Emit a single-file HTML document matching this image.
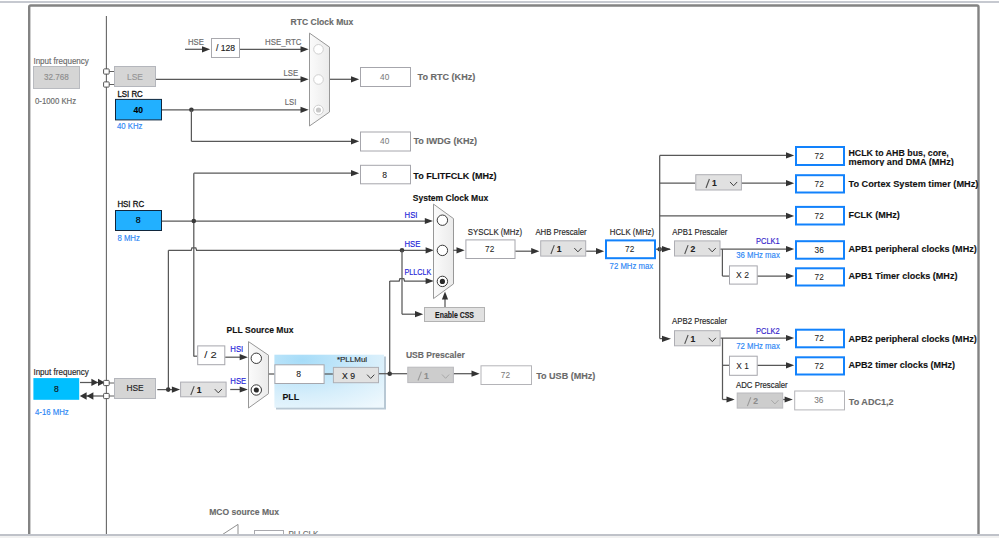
<!DOCTYPE html>
<html><head><meta charset="utf-8"><style>
html,body{margin:0;padding:0;background:#fff;width:999px;height:538px;overflow:hidden}
svg{display:block}
text{font-family:"Liberation Sans",sans-serif}
</style></head><body>
<svg width="999" height="538" viewBox="0 0 999 538">
<defs>
<linearGradient id="muxg" x1="0" y1="0" x2="1" y2="0"><stop offset="0" stop-color="#fbfbfb"/><stop offset="1" stop-color="#ebebeb"/></linearGradient>
<radialGradient id="pllg" cx="0.25" cy="0.1" r="1.1"><stop offset="0" stop-color="#a6dcf8"/><stop offset="0.6" stop-color="#d6eefb"/><stop offset="1" stop-color="#eef8fd"/></radialGradient>
</defs>
<rect x="0" y="0" width="999" height="538" fill="#fff"/>
<rect x="0" y="1" width="999" height="2" fill="#c6c9d0"/>
<rect x="29.2" y="5.5" width="949.3" height="560" rx="1.5" fill="none" stroke="#838383" stroke-width="2.4"/>
<line x1="106.4" y1="16" x2="106.4" y2="534" stroke="#666" stroke-width="1.1"/>
<text x="33.4" y="63.5" font-size="8.3" fill="#6a6a6a" stroke="#6a6a6a" stroke-width="0.15" text-anchor="start" textLength="55.5" lengthAdjust="spacingAndGlyphs" >Input frequency</text>
<rect x="33.5" y="66.5" width="46.0" height="22.0" fill="#d5d5d5" stroke="#b9bbc0" stroke-width="1" />
<text x="56.3" y="80.3" font-size="8.9" fill="#8e8e8e" stroke="#8e8e8e" stroke-width="0.15" text-anchor="middle" textLength="24.8" lengthAdjust="spacingAndGlyphs" >32.768</text>
<text x="35" y="103.7" font-size="8.3" fill="#6a6a6a" stroke="#6a6a6a" stroke-width="0.15" text-anchor="start" textLength="41.1" lengthAdjust="spacingAndGlyphs" >0-1000 KHz</text>
<line x1="109" y1="71.5" x2="114" y2="71.5" stroke="#606060" stroke-width="1"/>
<line x1="109" y1="84.5" x2="114" y2="84.5" stroke="#606060" stroke-width="1"/>
<rect x="103.60000000000001" y="68.9" width="5.599999999999994" height="5.199999999999989" fill="#fff" stroke="#555" stroke-width="1" rx="0.8"/>
<rect x="103.60000000000001" y="81.9" width="5.599999999999994" height="5.199999999999989" fill="#fff" stroke="#555" stroke-width="1" rx="0.8"/>
<rect x="114.5" y="66.5" width="41.0" height="20.0" fill="#d5d5d5" stroke="#b4b6bc" stroke-width="1" />
<text x="135" y="79.5" font-size="8.4" fill="#959595" stroke="#959595" stroke-width="0.15" text-anchor="middle" >LSE</text>
<text x="188" y="44.6" font-size="8.3" fill="#6a6a6a" stroke="#6a6a6a" stroke-width="0.15" text-anchor="start" textLength="15.9" lengthAdjust="spacingAndGlyphs" >HSE</text>
<line x1="185" y1="49.3" x2="207" y2="49.3" stroke="#585858" stroke-width="1.25"/>
<polygon points="210.20,49.30 202.00,46.20 202.00,52.40" fill="#333"/>
<rect x="211.5" y="38.5" width="28.0" height="19.0" fill="#fff" stroke="#a9a9ae" stroke-width="1" />
<text x="225.5" y="51.2" font-size="8.6" fill="#222" stroke="#222" stroke-width="0.15" text-anchor="middle" >/ 128</text>
<text x="301.5" y="45.2" font-size="8.3" fill="#6a6a6a" stroke="#6a6a6a" stroke-width="0.15" text-anchor="end" textLength="36.4" lengthAdjust="spacingAndGlyphs" >HSE_RTC</text>
<line x1="240" y1="49.3" x2="305.5" y2="49.3" stroke="#585858" stroke-width="1.25"/>
<polygon points="308.70,49.30 300.50,46.20 300.50,52.40" fill="#333"/>
<text x="298.2" y="75.8" font-size="8.3" fill="#6a6a6a" stroke="#6a6a6a" stroke-width="0.15" text-anchor="end" textLength="14.7" lengthAdjust="spacingAndGlyphs" >LSE</text>
<line x1="156" y1="79.3" x2="305.5" y2="79.3" stroke="#585858" stroke-width="1.25"/>
<polygon points="308.70,79.30 300.50,76.20 300.50,82.40" fill="#333"/>
<text x="296.4" y="105.4" font-size="8.3" fill="#6a6a6a" stroke="#6a6a6a" stroke-width="0.15" text-anchor="end" textLength="11.6" lengthAdjust="spacingAndGlyphs" >LSI</text>
<line x1="162" y1="109.8" x2="305.5" y2="109.8" stroke="#585858" stroke-width="1.25"/>
<polygon points="308.70,109.80 300.50,106.70 300.50,112.90" fill="#333"/>
<text x="290.6" y="25.3" font-size="8.55" fill="#6a6a6a" font-weight="bold" stroke="#6a6a6a" stroke-width="0.12" text-anchor="start" >RTC Clock Mux</text>
<polygon points="309.5,33.1 329.5,47.1 329.5,112 309.5,126" fill="url(#muxg)" stroke="#989898" stroke-width="1"/>
<circle cx="318.5" cy="49.3" r="4.8" fill="#fff" stroke="#d0d0d0" stroke-width="1"/>
<circle cx="318.5" cy="79.5" r="4.8" fill="#fff" stroke="#d0d0d0" stroke-width="1"/>
<circle cx="318.5" cy="110" r="4.8" fill="#fff" stroke="#d0d0d0" stroke-width="1"/>
<circle cx="318.5" cy="110" r="2.6" fill="#c8c8c8"/>
<line x1="330" y1="79.3" x2="356" y2="79.3" stroke="#585858" stroke-width="1.25"/>
<polygon points="359.20,79.30 351.00,76.20 351.00,82.40" fill="#333"/>
<rect x="360.5" y="67.5" width="50.0" height="19.0" fill="#fff" stroke="#a6a6ac" stroke-width="1" />
<text x="384.7" y="79.95" font-size="9.0" fill="#7a7a7a" stroke="#7a7a7a" stroke-width="0.05" text-anchor="middle" textLength="9.2" lengthAdjust="spacingAndGlyphs" >40</text>
<text x="417.6" y="80.1" font-size="9.05" fill="#6a6a6a" font-weight="bold" stroke="#6a6a6a" stroke-width="0.12" text-anchor="start" >To RTC (KHz)</text>
<text x="117.4" y="96.6" font-size="8.3" fill="#111" stroke="#111" stroke-width="0.3" text-anchor="start" textLength="25.4" lengthAdjust="spacingAndGlyphs" >LSI RC</text>
<rect x="115.5" y="99.4" width="46.0" height="20.5" fill="#22b0ff" stroke="#10263c" stroke-width="1" />
<text x="138.2" y="112.8" font-size="8.6" fill="#000" font-weight="bold" stroke="#000" stroke-width="0.12" text-anchor="middle" >40</text>
<text x="117" y="129" font-size="8.3" fill="#2b86f5" stroke="#2b86f5" stroke-width="0.15" text-anchor="start" textLength="25.5" lengthAdjust="spacingAndGlyphs" >40 KHz</text>
<circle cx="191.4" cy="109.8" r="2.3" fill="#3a3a3a"/>
<line x1="191.4" y1="109.8" x2="191.4" y2="141.3" stroke="#585858" stroke-width="1.25"/>
<line x1="191.4" y1="141.3" x2="356" y2="141.3" stroke="#585858" stroke-width="1.25"/>
<polygon points="359.20,141.30 351.00,138.20 351.00,144.40" fill="#333"/>
<rect x="360.5" y="132.0" width="50.0" height="19.0" fill="#fff" stroke="#a6a6ac" stroke-width="1" />
<text x="384.7" y="144.45" font-size="9.0" fill="#7a7a7a" stroke="#7a7a7a" stroke-width="0.05" text-anchor="middle" textLength="9.2" lengthAdjust="spacingAndGlyphs" >40</text>
<text x="413.4" y="144.2" font-size="9.05" fill="#6a6a6a" font-weight="bold" stroke="#6a6a6a" stroke-width="0.12" text-anchor="start" >To IWDG (KHz)</text>
<line x1="193.8" y1="173.2" x2="193.8" y2="356.5" stroke="#585858" stroke-width="1.25"/>
<line x1="193.8" y1="173.2" x2="356" y2="173.2" stroke="#585858" stroke-width="1.25"/>
<polygon points="359.20,173.20 351.00,170.10 351.00,176.30" fill="#333"/>
<rect x="360.5" y="165.3" width="50.0" height="18.5" fill="#fff" stroke="#a6a6ac" stroke-width="1" />
<text x="384.7" y="177.5" font-size="9.0" fill="#222" stroke="#222" stroke-width="0.05" text-anchor="middle" textLength="4.8" lengthAdjust="spacingAndGlyphs" >8</text>
<text x="413.3" y="179.3" font-size="9.05" fill="#111" font-weight="bold" stroke="#111" stroke-width="0.12" text-anchor="start" >To FLITFCLK (MHz)</text>
<text x="117.4" y="207" font-size="8.3" fill="#111" stroke="#111" stroke-width="0.3" text-anchor="start" textLength="26.7" lengthAdjust="spacingAndGlyphs" >HSI RC</text>
<rect x="115.5" y="210.5" width="46.0" height="20.0" fill="#22b0ff" stroke="#10263c" stroke-width="1" />
<text x="138.1" y="223.3" font-size="8.8" fill="#000" stroke="#000" stroke-width="0.15" text-anchor="middle" >8</text>
<text x="117.4" y="240.8" font-size="8.3" fill="#2b86f5" stroke="#2b86f5" stroke-width="0.15" text-anchor="start" textLength="22.5" lengthAdjust="spacingAndGlyphs" >8 MHz</text>
<line x1="162" y1="221" x2="429.8" y2="221" stroke="#585858" stroke-width="1.25"/>
<polygon points="433.00,221.00 424.80,217.90 424.80,224.10" fill="#333"/>
<circle cx="193.8" cy="221" r="2.3" fill="#3a3a3a"/>
<text x="404.6" y="217.8" font-size="8.3" fill="#2121d8" stroke="#2121d8" stroke-width="0.15" text-anchor="start" textLength="12.9" lengthAdjust="spacingAndGlyphs" >HSI</text>
<path d="M168.4,250.3 H191.2 L191.9,247.8 H195.8 L196.6,250.3 H429.8" fill="none" stroke="#585858" stroke-width="1.25"/>
<polygon points="433.80,250.30 425.60,247.20 425.60,253.40" fill="#333"/>
<circle cx="402" cy="250.3" r="2.3" fill="#3a3a3a"/>
<text x="404.5" y="246.7" font-size="8.3" fill="#2121d8" stroke="#2121d8" stroke-width="0.15" text-anchor="start" textLength="15.9" lengthAdjust="spacingAndGlyphs" >HSE</text>
<line x1="168.4" y1="250.3" x2="168.4" y2="389.5" stroke="#585858" stroke-width="1.25"/>
<line x1="402" y1="250.3" x2="402" y2="314.2" stroke="#585858" stroke-width="1.25"/>
<line x1="402" y1="314.2" x2="420" y2="314.2" stroke="#585858" stroke-width="1.25"/>
<polygon points="423.20,314.20 415.00,311.10 415.00,317.30" fill="#333"/>
<rect x="424.5" y="307.5" width="60.0" height="14.0" fill="#e1e1e1" stroke="#b2b2b2" stroke-width="1" />
<text x="454.5" y="318.1" font-size="8.3" fill="#1a1a1a" font-weight="bold" stroke="#1a1a1a" stroke-width="0.12" text-anchor="middle" textLength="39" lengthAdjust="spacingAndGlyphs" >Enable CSS</text>
<line x1="445" y1="307" x2="445" y2="296" stroke="#585858" stroke-width="1.25"/>
<polygon points="445.00,291.40 441.90,299.60 448.10,299.60" fill="#333"/>
<path d="M389.7,281 H399.2 L399.9,278.5 H403.8 L404.5,281 H429.8" fill="none" stroke="#585858" stroke-width="1.25"/>
<polygon points="433.80,281.00 425.60,277.90 425.60,284.10" fill="#333"/>
<text x="404.5" y="274.8" font-size="8.3" fill="#2121d8" stroke="#2121d8" stroke-width="0.15" text-anchor="start" textLength="26.8" lengthAdjust="spacingAndGlyphs" >PLLCLK</text>
<line x1="389.7" y1="281" x2="389.7" y2="373.7" stroke="#585858" stroke-width="1.25"/>
<text x="412.7" y="201" font-size="8.55" fill="#111" font-weight="bold" stroke="#111" stroke-width="0.12" text-anchor="start" >System Clock Mux</text>
<polygon points="433.5,204.1 453.5,218.6 453.5,283.9 433.5,298.6" fill="url(#muxg)" stroke="#989898" stroke-width="1"/>
<circle cx="442.4" cy="220.2" r="5.2" fill="#fff" stroke="#3a3a3a" stroke-width="1"/>
<circle cx="442.4" cy="250.4" r="5.2" fill="#fff" stroke="#3a3a3a" stroke-width="1"/>
<circle cx="442.4" cy="281.4" r="5.2" fill="#fff" stroke="#3a3a3a" stroke-width="1"/>
<circle cx="442.4" cy="281.4" r="2.6" fill="#2a2a2a"/>
<line x1="453.3" y1="250.3" x2="461.5" y2="250.3" stroke="#585858" stroke-width="1.25"/>
<polygon points="464.70,250.30 456.50,247.20 456.50,253.40" fill="#333"/>
<rect x="465.9" y="239.9" width="49.10000000000002" height="18.599999999999994" fill="#fff" stroke="#a6a6ac" stroke-width="1" />
<text x="489.65" y="252.14999999999998" font-size="9.0" fill="#222" stroke="#222" stroke-width="0.05" text-anchor="middle" textLength="9.2" lengthAdjust="spacingAndGlyphs" >72</text>
<text x="467.8" y="235" font-size="8.3" fill="#262626" stroke="#262626" stroke-width="0.15" text-anchor="start" textLength="54.2" lengthAdjust="spacingAndGlyphs" >SYSCLK (MHz)</text>
<line x1="515.5" y1="251.2" x2="536.2" y2="251.2" stroke="#585858" stroke-width="1.25"/>
<polygon points="539.40,251.20 531.20,248.10 531.20,254.30" fill="#333"/>
<rect x="540.7" y="240.8" width="45.0" height="15.300000000000011" fill="#e1e1e1" stroke="#aeaeb4" stroke-width="1" />
<line x1="550.9000000000001" y1="254.05" x2="554.3000000000001" y2="245.15" stroke="#505050" stroke-width="1.1"/>
<text x="556.8000000000001" y="252.15" font-size="8.6" fill="#222" font-weight="bold" stroke="#222" stroke-width="0.12" text-anchor="start" >1</text>
<polyline points="574.3000000000001,248.05 577.9000000000001,251.85000000000002 581.5000000000001,248.05" fill="none" stroke="#404040" stroke-width="1" />
<text x="535.4" y="234.6" font-size="8.3" fill="#262626" stroke="#262626" stroke-width="0.15" text-anchor="start" textLength="51.2" lengthAdjust="spacingAndGlyphs" >AHB Prescaler</text>
<line x1="586.2" y1="251.2" x2="601" y2="251.2" stroke="#585858" stroke-width="1.25"/>
<polygon points="604.20,251.20 596.00,248.10 596.00,254.30" fill="#333"/>
<rect x="606" y="240.4" width="49" height="17.799999999999983" fill="#fff" stroke="#1282fc" stroke-width="2" />
<text x="629.7" y="252.25" font-size="9.0" fill="#222" stroke="#222" stroke-width="0.05" text-anchor="middle" textLength="9.2" lengthAdjust="spacingAndGlyphs" >72</text>
<text x="609.8" y="235" font-size="8.3" fill="#262626" stroke="#262626" stroke-width="0.15" text-anchor="start" textLength="44.3" lengthAdjust="spacingAndGlyphs" >HCLK (MHz)</text>
<text x="609.6" y="268.5" font-size="8.3" fill="#2b86f5" stroke="#2b86f5" stroke-width="0.15" text-anchor="start" textLength="43.6" lengthAdjust="spacingAndGlyphs" >72 MHz max</text>
<line x1="656" y1="249.2" x2="659.7" y2="249.2" stroke="#585858" stroke-width="1.25"/>
<circle cx="659.7" cy="249.2" r="2.3" fill="#3a3a3a"/>
<line x1="659.7" y1="155.4" x2="659.7" y2="338.6" stroke="#585858" stroke-width="1.25"/>
<line x1="659.7" y1="155.4" x2="791" y2="155.4" stroke="#585858" stroke-width="1.25"/>
<polygon points="794.20,155.40 786.00,152.30 786.00,158.50" fill="#333"/>
<rect x="796" y="147" width="48" height="18" fill="#fff" stroke="#1282fc" stroke-width="2" />
<text x="819.2" y="158.95" font-size="9.0" fill="#222" stroke="#222" stroke-width="0.05" text-anchor="middle" textLength="9.2" lengthAdjust="spacingAndGlyphs" >72</text>
<clipPath id="c1"><rect x="840" y="140" width="140" height="26"/></clipPath>
<text x="848.5" y="156.2" font-size="9.05" fill="#111" font-weight="bold" stroke="#111" stroke-width="0.12" text-anchor="start" textLength="100.3" lengthAdjust="spacingAndGlyphs" clip-path="url(#c1)">HCLK to AHB bus, core,</text>
<text x="848.5" y="165.4" font-size="9.05" fill="#111" font-weight="bold" stroke="#111" stroke-width="0.12" text-anchor="start" textLength="105.3" lengthAdjust="spacingAndGlyphs" clip-path="url(#c1)">memory and DMA (MHz)</text>
<line x1="659.7" y1="183.2" x2="695.3" y2="183.2" stroke="#585858" stroke-width="1.25"/>
<rect x="695.8" y="174.7" width="45.60000000000002" height="15.300000000000011" fill="#e1e1e1" stroke="#aeaeb4" stroke-width="1" />
<line x1="706.0" y1="187.95" x2="709.4" y2="179.04999999999998" stroke="#505050" stroke-width="1.1"/>
<text x="711.9" y="186.04999999999998" font-size="8.6" fill="#222" font-weight="bold" stroke="#222" stroke-width="0.12" text-anchor="start" >1</text>
<polyline points="730.0,181.95 733.6,185.75 737.2,181.95" fill="none" stroke="#404040" stroke-width="1" />
<line x1="741.9" y1="183.2" x2="791" y2="183.2" stroke="#585858" stroke-width="1.25"/>
<polygon points="794.20,183.20 786.00,180.10 786.00,186.30" fill="#333"/>
<rect x="796" y="175.2" width="48" height="17.30000000000001" fill="#fff" stroke="#1282fc" stroke-width="2" />
<text x="819.2" y="186.79999999999998" font-size="9.0" fill="#222" stroke="#222" stroke-width="0.05" text-anchor="middle" textLength="9.2" lengthAdjust="spacingAndGlyphs" >72</text>
<text x="848.5" y="186.6" font-size="9.05" fill="#111" font-weight="bold" stroke="#111" stroke-width="0.12" text-anchor="start" textLength="129.8" lengthAdjust="spacingAndGlyphs" >To Cortex System timer (MHz)</text>
<line x1="659.7" y1="215.9" x2="791" y2="215.9" stroke="#585858" stroke-width="1.25"/>
<polygon points="794.20,215.90 786.00,212.80 786.00,219.00" fill="#333"/>
<rect x="796" y="206.9" width="48" height="17.599999999999994" fill="#fff" stroke="#1282fc" stroke-width="2" />
<text x="819.2" y="218.64999999999998" font-size="9.0" fill="#222" stroke="#222" stroke-width="0.05" text-anchor="middle" textLength="9.2" lengthAdjust="spacingAndGlyphs" >72</text>
<text x="848.5" y="217.8" font-size="9.05" fill="#111" font-weight="bold" stroke="#111" stroke-width="0.12" text-anchor="start" >FCLK (MHz)</text>
<line x1="659.7" y1="249.2" x2="670" y2="249.2" stroke="#585858" stroke-width="1.25"/>
<polygon points="671.00,249.20 662.00,246.10 662.00,252.30" fill="#333"/>
<rect x="674.5" y="240.9" width="45.5" height="15.099999999999994" fill="#e1e1e1" stroke="#aeaeb4" stroke-width="1" />
<line x1="684.7" y1="254.04999999999998" x2="688.1" y2="245.14999999999998" stroke="#505050" stroke-width="1.1"/>
<text x="690.6" y="252.14999999999998" font-size="8.6" fill="#222" font-weight="bold" stroke="#222" stroke-width="0.12" text-anchor="start" >2</text>
<polyline points="708.6,248.04999999999998 712.2,251.85 715.8000000000001,248.04999999999998" fill="none" stroke="#404040" stroke-width="1" />
<text x="672.3" y="235.1" font-size="8.3" fill="#262626" stroke="#262626" stroke-width="0.15" text-anchor="start" textLength="55.1" lengthAdjust="spacingAndGlyphs" >APB1 Prescaler</text>
<line x1="720.5" y1="249.1" x2="791" y2="249.1" stroke="#585858" stroke-width="1.25"/>
<polygon points="794.20,249.10 786.00,246.00 786.00,252.20" fill="#333"/>
<text x="779.8" y="243.6" font-size="8.3" fill="#3322cc" stroke="#3322cc" stroke-width="0.15" text-anchor="end" textLength="23.8" lengthAdjust="spacingAndGlyphs" >PCLK1</text>
<text x="779.8" y="257.9" font-size="8.3" fill="#2b86f5" stroke="#2b86f5" stroke-width="0.15" text-anchor="end" textLength="43.6" lengthAdjust="spacingAndGlyphs" >36 MHz max</text>
<rect x="796" y="241.2" width="48" height="17.5" fill="#fff" stroke="#1282fc" stroke-width="2" />
<text x="819.2" y="252.89999999999998" font-size="9.0" fill="#222" stroke="#222" stroke-width="0.05" text-anchor="middle" textLength="9.2" lengthAdjust="spacingAndGlyphs" >36</text>
<text x="848.5" y="252.3" font-size="9.05" fill="#111" font-weight="bold" stroke="#111" stroke-width="0.12" text-anchor="start" >APB1 peripheral clocks (MHz)</text>
<line x1="722.4" y1="249.1" x2="722.4" y2="276.1" stroke="#585858" stroke-width="1.25"/>
<line x1="722.4" y1="276.1" x2="729" y2="276.1" stroke="#585858" stroke-width="1.25"/>
<rect x="729.5" y="265.9" width="27.700000000000045" height="18.200000000000045" fill="#fff" stroke="#a6a6ac" stroke-width="1" />
<text x="742.5500000000001" y="277.95" font-size="9.0" fill="#222" stroke="#222" stroke-width="0.05" text-anchor="middle" textLength="13" lengthAdjust="spacingAndGlyphs" >X 2</text>
<line x1="757.7" y1="276.1" x2="791" y2="276.1" stroke="#585858" stroke-width="1.25"/>
<polygon points="794.20,276.10 786.00,273.00 786.00,279.20" fill="#333"/>
<rect x="796" y="268.3" width="48" height="17.19999999999999" fill="#fff" stroke="#1282fc" stroke-width="2" />
<text x="819.2" y="279.84999999999997" font-size="9.0" fill="#222" stroke="#222" stroke-width="0.05" text-anchor="middle" textLength="9.2" lengthAdjust="spacingAndGlyphs" >72</text>
<text x="848.5" y="279.0" font-size="9.05" fill="#111" font-weight="bold" stroke="#111" stroke-width="0.12" text-anchor="start" >APB1 Timer clocks (MHz)</text>
<path d="M659.7,338.6 H666" fill="none" stroke="#585858" stroke-width="1.25"/>
<polygon points="671.00,338.80 662.00,335.70 662.00,341.90" fill="#333"/>
<rect x="674.5" y="330.7" width="45.60000000000002" height="15.100000000000023" fill="#e1e1e1" stroke="#aeaeb4" stroke-width="1" />
<line x1="684.7" y1="343.85" x2="688.1" y2="334.95" stroke="#505050" stroke-width="1.1"/>
<text x="690.6" y="341.95" font-size="8.6" fill="#222" font-weight="bold" stroke="#222" stroke-width="0.12" text-anchor="start" >1</text>
<polyline points="708.7,337.85 712.3000000000001,341.65 715.9000000000001,337.85" fill="none" stroke="#404040" stroke-width="1" />
<text x="672.1" y="324.3" font-size="8.3" fill="#262626" stroke="#262626" stroke-width="0.15" text-anchor="start" textLength="55.1" lengthAdjust="spacingAndGlyphs" >APB2 Prescaler</text>
<line x1="720.6" y1="338" x2="791" y2="338" stroke="#585858" stroke-width="1.25"/>
<polygon points="794.20,338.00 786.00,334.90 786.00,341.10" fill="#333"/>
<text x="779.8" y="333.7" font-size="8.3" fill="#3322cc" stroke="#3322cc" stroke-width="0.15" text-anchor="end" textLength="23.8" lengthAdjust="spacingAndGlyphs" >PCLK2</text>
<text x="779.8" y="348.7" font-size="8.3" fill="#2b86f5" stroke="#2b86f5" stroke-width="0.15" text-anchor="end" textLength="43.6" lengthAdjust="spacingAndGlyphs" >72 MHz max</text>
<rect x="796" y="329.7" width="48" height="17.600000000000023" fill="#fff" stroke="#1282fc" stroke-width="2" />
<text x="819.2" y="341.45" font-size="9.0" fill="#222" stroke="#222" stroke-width="0.05" text-anchor="middle" textLength="9.2" lengthAdjust="spacingAndGlyphs" >72</text>
<text x="848.5" y="341.6" font-size="9.05" fill="#111" font-weight="bold" stroke="#111" stroke-width="0.12" text-anchor="start" >APB2 peripheral clocks (MHz)</text>
<line x1="722.5" y1="338" x2="722.5" y2="399.5" stroke="#585858" stroke-width="1.25"/>
<line x1="722.5" y1="365.3" x2="729" y2="365.3" stroke="#585858" stroke-width="1.25"/>
<rect x="729.5" y="356.2" width="27.700000000000045" height="19.100000000000023" fill="#fff" stroke="#a6a6ac" stroke-width="1" />
<text x="742.5500000000001" y="368.7" font-size="9.0" fill="#222" stroke="#222" stroke-width="0.05" text-anchor="middle" textLength="12.5" lengthAdjust="spacingAndGlyphs" >X 1</text>
<line x1="757.7" y1="365.3" x2="791" y2="365.3" stroke="#585858" stroke-width="1.25"/>
<polygon points="794.20,365.30 786.00,362.20 786.00,368.40" fill="#333"/>
<rect x="796" y="357.3" width="48" height="17.19999999999999" fill="#fff" stroke="#1282fc" stroke-width="2" />
<text x="819.2" y="368.84999999999997" font-size="9.0" fill="#222" stroke="#222" stroke-width="0.05" text-anchor="middle" textLength="9.2" lengthAdjust="spacingAndGlyphs" >72</text>
<text x="848.5" y="367.9" font-size="9.05" fill="#111" font-weight="bold" stroke="#111" stroke-width="0.12" text-anchor="start" >APB2 timer clocks (MHz)</text>
<line x1="722.5" y1="399.5" x2="732.7" y2="399.5" stroke="#585858" stroke-width="1.25"/>
<polygon points="734.70,399.50 726.50,396.40 726.50,402.60" fill="#333"/>
<rect x="737.2" y="393.0" width="45.5" height="15.100000000000023" fill="#cdcdcd" stroke="#b9b9bd" stroke-width="1" />
<line x1="747.4000000000001" y1="406.15000000000003" x2="750.8000000000001" y2="397.25" stroke="#9a9a9a" stroke-width="1.1"/>
<text x="753.3000000000001" y="404.25" font-size="8.6" fill="#8c8c8c" font-weight="bold" stroke="#8c8c8c" stroke-width="0.12" text-anchor="start" >2</text>
<polyline points="771.3000000000001,400.15000000000003 774.9000000000001,403.95 778.5000000000001,400.15000000000003" fill="none" stroke="#a8a8a8" stroke-width="1" />
<text x="736" y="387.9" font-size="8.3" fill="#262626" stroke="#262626" stroke-width="0.15" text-anchor="start" textLength="51.7" lengthAdjust="spacingAndGlyphs" >ADC Prescaler</text>
<line x1="783.2" y1="399.5" x2="790.2" y2="399.5" stroke="#585858" stroke-width="1.25"/>
<polygon points="792.80,399.50 784.60,396.40 784.60,402.60" fill="#333"/>
<rect x="794.7" y="391.0" width="49.799999999999955" height="18.899999999999977" fill="#fff" stroke="#b4b4b8" stroke-width="1" />
<text x="818.8000000000001" y="403.4" font-size="9.0" fill="#7a7a7a" stroke="#7a7a7a" stroke-width="0.05" text-anchor="middle" textLength="9.2" lengthAdjust="spacingAndGlyphs" >36</text>
<text x="848.8" y="404.8" font-size="9.05" fill="#6a6a6a" font-weight="bold" stroke="#6a6a6a" stroke-width="0.12" text-anchor="start" >To ADC1,2</text>
<line x1="193.8" y1="356.2" x2="197.2" y2="356.2" stroke="#585858" stroke-width="1.25"/>
<rect x="197.7" y="345.9" width="27.100000000000023" height="18.80000000000001" fill="#fff" stroke="#a6a6ac" stroke-width="1" />
<text x="210.45" y="358.24999999999994" font-size="9.0" fill="#222" stroke="#222" stroke-width="0.05" text-anchor="middle" textLength="12.5" lengthAdjust="spacingAndGlyphs" >/ 2</text>
<line x1="225.3" y1="357.2" x2="244.7" y2="357.2" stroke="#585858" stroke-width="1.25"/>
<polygon points="247.90,357.20 239.70,354.10 239.70,360.30" fill="#333"/>
<text x="230.3" y="351.5" font-size="8.3" fill="#2121d8" stroke="#2121d8" stroke-width="0.15" text-anchor="start" textLength="12.9" lengthAdjust="spacingAndGlyphs" >HSI</text>
<line x1="157.3" y1="389.6" x2="176" y2="389.6" stroke="#585858" stroke-width="1.25"/>
<circle cx="168.2" cy="389.6" r="2.3" fill="#3a3a3a"/>
<polygon points="180.10,389.60 171.90,386.50 171.90,392.70" fill="#333"/>
<rect x="180.6" y="382.1" width="45.5" height="14.699999999999989" fill="#e1e1e1" stroke="#aeaeb4" stroke-width="1" />
<line x1="190.79999999999998" y1="395.05000000000007" x2="194.2" y2="386.15000000000003" stroke="#505050" stroke-width="1.1"/>
<text x="196.7" y="393.15000000000003" font-size="8.6" fill="#222" font-weight="bold" stroke="#222" stroke-width="0.12" text-anchor="start" >1</text>
<polyline points="214.7,389.05000000000007 218.29999999999998,392.85 221.89999999999998,389.05000000000007" fill="none" stroke="#404040" stroke-width="1" />
<line x1="230.2" y1="389.5" x2="244.7" y2="389.5" stroke="#585858" stroke-width="1.25"/>
<polygon points="247.90,389.50 239.70,386.40 239.70,392.60" fill="#333"/>
<text x="230.3" y="383.9" font-size="8.3" fill="#2121d8" stroke="#2121d8" stroke-width="0.15" text-anchor="start" textLength="15.9" lengthAdjust="spacingAndGlyphs" >HSE</text>
<text x="226.6" y="333" font-size="8.55" fill="#111" font-weight="bold" stroke="#111" stroke-width="0.12" text-anchor="start" >PLL Source Mux</text>
<rect x="276" y="356.5" width="110" height="53" fill="#b8c8d4"/>
<rect x="274.4" y="354.7" width="109.6" height="53" fill="url(#pllg)"/>
<polygon points="248.5,341.6 268.5,355.2 268.5,393.7 248.5,408" fill="url(#muxg)" stroke="#989898" stroke-width="1"/>
<circle cx="256.3" cy="358.3" r="5.2" fill="#fff" stroke="#3a3a3a" stroke-width="1"/>
<circle cx="256.3" cy="390" r="5.2" fill="#fff" stroke="#3a3a3a" stroke-width="1"/>
<circle cx="256.3" cy="390" r="2.6" fill="#2a2a2a"/>
<line x1="268.8" y1="374" x2="274.4" y2="374" stroke="#585858" stroke-width="1.25"/>
<rect x="274.9" y="364.8" width="49.200000000000045" height="18.69999999999999" fill="#fff" stroke="#a6a6ac" stroke-width="1" />
<text x="298.7" y="377.09999999999997" font-size="9.0" fill="#222" stroke="#222" stroke-width="0.05" text-anchor="middle" textLength="4.8" lengthAdjust="spacingAndGlyphs" >8</text>
<line x1="324.6" y1="374" x2="332.9" y2="374" stroke="#585858" stroke-width="1.25"/>
<rect x="333.4" y="367.4" width="45.10000000000002" height="15.300000000000011" fill="#e1e1e1" stroke="#aeaeb4" stroke-width="1" />
<text x="342.09999999999997" y="378.84999999999997" font-size="8.6" fill="#222" stroke="#222" stroke-width="0.15" text-anchor="start" >X 9</text>
<polyline points="367.09999999999997,374.65 370.7,378.44999999999993 374.3,374.65" fill="none" stroke="#404040" stroke-width="1" />
<text x="336.9" y="362.1" font-size="8.0" fill="#262626" stroke="#262626" stroke-width="0.15" text-anchor="start" >*PLLMul</text>
<text x="282.4" y="400" font-size="8.8" fill="#111" font-weight="bold" stroke="#111" stroke-width="0.12" text-anchor="start" >PLL</text>
<line x1="379" y1="373.7" x2="407.3" y2="373.7" stroke="#585858" stroke-width="1.25"/>
<circle cx="389.7" cy="373.7" r="2.3" fill="#3a3a3a"/>
<rect x="407.8" y="367.2" width="45.599999999999966" height="15.400000000000034" fill="#cdcdcd" stroke="#b9b9bd" stroke-width="1" />
<line x1="418.0" y1="380.5" x2="421.40000000000003" y2="371.59999999999997" stroke="#9a9a9a" stroke-width="1.1"/>
<text x="423.90000000000003" y="378.59999999999997" font-size="8.6" fill="#8c8c8c" font-weight="bold" stroke="#8c8c8c" stroke-width="0.12" text-anchor="start" >1</text>
<polyline points="441.99999999999994,374.5 445.59999999999997,378.29999999999995 449.2,374.5" fill="none" stroke="#a8a8a8" stroke-width="1" />
<text x="405.9" y="357.9" font-size="8.55" fill="#6a6a6a" font-weight="bold" stroke="#6a6a6a" stroke-width="0.12" text-anchor="start" >USB Prescaler</text>
<line x1="453.9" y1="373.7" x2="476.5" y2="373.7" stroke="#585858" stroke-width="1.25"/>
<polygon points="479.70,373.70 471.50,370.60 471.50,376.80" fill="#333"/>
<rect x="481.0" y="365.8" width="50.5" height="18.69999999999999" fill="#fff" stroke="#b4b4b8" stroke-width="1" />
<text x="505.45" y="378.09999999999997" font-size="9.0" fill="#7a7a7a" stroke="#7a7a7a" stroke-width="0.05" text-anchor="middle" textLength="9.2" lengthAdjust="spacingAndGlyphs" >72</text>
<text x="536.2" y="379.1" font-size="9.05" fill="#6a6a6a" font-weight="bold" stroke="#6a6a6a" stroke-width="0.12" text-anchor="start" >To USB (MHz)</text>
<text x="33.4" y="375.1" font-size="8.3" fill="#262626" stroke="#262626" stroke-width="0.15" text-anchor="start" textLength="55.5" lengthAdjust="spacingAndGlyphs" >Input frequency</text>
<rect x="33.4" y="378.1" width="45.800000000000004" height="21.69999999999999" fill="#00bfff" stroke="none" stroke-width="1" />
<text x="56.5" y="392.3" font-size="8.6" fill="#111" stroke="#111" stroke-width="0.15" text-anchor="middle" >8</text>
<text x="35" y="414.7" font-size="8.3" fill="#2b86f5" stroke="#2b86f5" stroke-width="0.15" text-anchor="start" textLength="33.7" lengthAdjust="spacingAndGlyphs" >4-16 MHz</text>
<line x1="80" y1="382.5" x2="100" y2="382.5" stroke="#585858" stroke-width="1.25"/>
<polygon points="98.20,382.40 91.40,378.70 91.40,386.10" fill="#333"/>
<polygon points="104.80,382.40 98.00,378.70 98.00,386.10" fill="#333"/>
<line x1="86" y1="396" x2="103.5" y2="396" stroke="#585858" stroke-width="1.25"/>
<polygon points="79.80,396.00 86.60,392.30 86.60,399.70" fill="#333"/>
<polygon points="86.60,396.00 93.40,392.30 93.40,399.70" fill="#333"/>
<line x1="109" y1="383" x2="114" y2="383" stroke="#606060" stroke-width="1"/>
<line x1="109" y1="396" x2="114" y2="396" stroke="#606060" stroke-width="1"/>
<rect x="103.60000000000001" y="380.4" width="5.599999999999994" height="5.2000000000000455" fill="#fff" stroke="#555" stroke-width="1" rx="0.8"/>
<rect x="103.60000000000001" y="393.4" width="5.599999999999994" height="5.2000000000000455" fill="#fff" stroke="#555" stroke-width="1" rx="0.8"/>
<rect x="114.5" y="378.5" width="41.0" height="20.0" fill="#d5d5d5" stroke="#b4b6bc" stroke-width="1" />
<text x="135" y="391.2" font-size="8.4" fill="#1e1e1e" stroke="#1e1e1e" stroke-width="0.15" text-anchor="middle" >HSE</text>
<text x="209.2" y="515" font-size="8.55" fill="#6a6a6a" font-weight="bold" stroke="#6a6a6a" stroke-width="0.12" text-anchor="start" >MCO source Mux</text>
<polyline points="222.5,534.5 238,524.4 238,534.5" fill="none" stroke="#909090" stroke-width="1" />
<rect x="254.5" y="530.5" width="29.0" height="9.5" fill="#fff" stroke="#a9a9ae" stroke-width="1" />
<text x="288.5" y="536.8" font-size="8.3" fill="#6a6a6a" stroke="#6a6a6a" stroke-width="0.15" text-anchor="start" textLength="29.7" lengthAdjust="spacingAndGlyphs" >PLLCLK</text>
<rect x="0" y="534" width="999" height="2" fill="#bfc2c9"/>
<rect x="0" y="536" width="999" height="2" fill="#f1f1f1"/>
</svg></body></html>
